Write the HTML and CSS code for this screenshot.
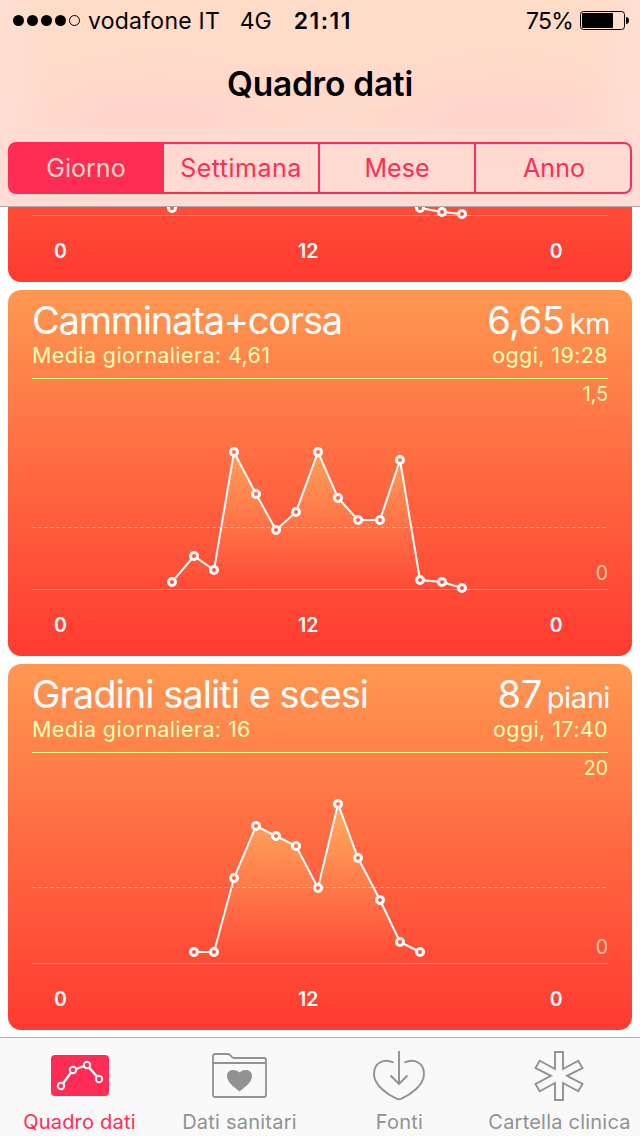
FILE: index.html
```
<!DOCTYPE html>
<html lang="it">
<head>
  <meta charset="UTF-8" />
  <meta name="viewport" content="width=device-width, initial-scale=1" />
  <title>Quadro dati</title>
  <link rel="stylesheet" href="styles.css">
</head>
<body>

<header>
  <div class="status-bar">
    <div class="signal">
      <i></i><i></i><i></i><i></i><i class="empty"></i>
    </div>
    <span class="carrier">vodafone IT</span>
    <span class="network">4G</span>
    <span class="time">21:11</span>
    <span class="percent">75%</span>
    <svg class="battery" width="49" height="19" viewBox="0 0 49 19">
      <rect x="0.5" y="0.5" width="44" height="18" rx="3" fill="none" stroke="#000" />
      <rect x="2" y="2" width="31" height="15" rx="1" />
      <path d="M46 6c1.8 0 3 1.5 3 3.5S47.800 13 46 13z" />
    </svg>
  </div>
  <h1>Quadro dati</h1>
  <nav class="segments">
    <a class="active">Giorno</a>
    <a class="week">Settimana</a>
    <a>Mese</a>
    <a class="year">Anno</a>
  </nav>
</header>

<main>
  <section class="card">
    <svg class="chart" viewBox="0 0 576 211">
      <defs>
        <linearGradient id="cardFill" gradientUnits="userSpaceOnUse" x1="0" y1="-89" x2="0" y2="277">
          <stop offset="0" stop-color="#ff9852" />
          <stop offset="1" stop-color="#ff3a30" />
        </linearGradient>
        <linearGradient id="areaFill" gradientUnits="userSpaceOnUse" x1="0" y1="30" x2="0" y2="205">
          <stop offset="0" stop-color="#ffcc6c" stop-opacity="0.8" />
          <stop offset="1" stop-color="#ffa060" stop-opacity="0" />
        </linearGradient>
      </defs>
      <path class="base" d="M0 210.500H576" />
      <polyline class="line" points="388,203 410,207 430,209" />
      <g class="dots">
        <circle cx="140" cy="203" r="3.5" />
        <circle cx="388" cy="203" r="3.5" />
        <circle cx="410" cy="207" r="3.5" />
        <circle cx="430" cy="209" r="3.5" />
      </g>
    </svg>
    <div class="hours"><span>0</span><span>12</span><span>0</span></div>
  </section>

  <section class="card">
    <div class="card-head">
      <div class="row">
        <h2>Camminata+corsa</h2>
        <p class="value">6,65<small>km</small></p>
      </div>
      <div class="row sub">
        <span>Media giornaliera: 4,61</span>
        <span>oggi, 19:28</span>
      </div>
    </div>
    <svg class="chart" viewBox="0 0 576 211">
      <path class="base" d="M0 210.500H576" />
      <polygon class="area" points="140,210 140,203 162,177 182,191 202,73 224,115 244,151 264,133 286,73 306,119 326,141 348,141 368,81 388,201 410,203 430,209 430,210" />
      <path class="average" d="M0 148.500H576" />
      <polyline class="line" points="140,203 162,177 182,191 202,73 224,115 244,151 264,133 286,73 306,119 326,141 348,141 368,81 388,201 410,203 430,209" />
      <g class="dots">
        <circle cx="140" cy="203" r="3.5" />
        <circle cx="162" cy="177" r="3.5" />
        <circle cx="182" cy="191" r="3.5" />
        <circle cx="202" cy="73" r="3.5" />
        <circle cx="224" cy="115" r="3.5" />
        <circle cx="244" cy="151" r="3.5" />
        <circle cx="264" cy="133" r="3.5" />
        <circle cx="286" cy="73" r="3.5" />
        <circle cx="306" cy="119" r="3.5" />
        <circle cx="326" cy="141" r="3.5" />
        <circle cx="348" cy="141" r="3.5" />
        <circle cx="368" cy="81" r="3.5" />
        <circle cx="388" cy="201" r="3.5" />
        <circle cx="410" cy="203" r="3.5" />
        <circle cx="430" cy="209" r="3.5" />
      </g>
      <text class="max" x="576" y="22">1,5</text>
      <text class="min" x="576" y="201">0</text>
    </svg>
    <div class="hours"><span>0</span><span>12</span><span>0</span></div>
  </section>

  <section class="card">
    <div class="card-head">
      <div class="row">
        <h2 class="stairs">Gradini saliti e scesi</h2>
        <p class="value">87<small>piani</small></p>
      </div>
      <div class="row sub">
        <span>Media giornaliera: 16</span>
        <span>oggi, 17:40</span>
      </div>
    </div>
    <svg class="chart" viewBox="0 0 576 211">
      <path class="base" d="M0 210.500H576" />
      <polygon class="area" points="162,210 162,199 182,199 202,125 224,73 244,83 264,93 286,135 306,51 326,105 348,147 368,189 388,199 388,210" />
      <path class="average" d="M0 134.500H576" />
      <polyline class="line" points="162,199 182,199 202,125 224,73 244,83 264,93 286,135 306,51 326,105 348,147 368,189 388,199" />
      <g class="dots">
        <circle cx="162" cy="199" r="3.5" />
        <circle cx="182" cy="199" r="3.5" />
        <circle cx="202" cy="125" r="3.5" />
        <circle cx="224" cy="73" r="3.5" />
        <circle cx="244" cy="83" r="3.5" />
        <circle cx="264" cy="93" r="3.5" />
        <circle cx="286" cy="135" r="3.5" />
        <circle cx="306" cy="51" r="3.5" />
        <circle cx="326" cy="105" r="3.5" />
        <circle cx="348" cy="147" r="3.5" />
        <circle cx="368" cy="189" r="3.5" />
        <circle cx="388" cy="199" r="3.5" />
      </g>
      <text class="max" x="576" y="22">20</text>
      <text class="min" x="576" y="201">0</text>
    </svg>
    <div class="hours"><span>0</span><span>12</span><span>0</span></div>
  </section>
</main>

<footer>
  <a class="active">
    <svg width="60" height="52" viewBox="0 0 60 52">
      <rect x="1" y="5" width="58" height="41" rx="4" fill="#ff2d55" />
      <g fill="none" stroke="#fff" stroke-width="2">
        <path d="M13 33.500L21 22.500M26 19L34 16M39 17.500L47 26.500" stroke-width="2.400" />
        <circle cx="11" cy="36" r="3.200" />
        <circle cx="23" cy="20" r="3.200" />
        <circle cx="37" cy="15" r="3.200" />
        <circle cx="49" cy="29" r="3.200" />
      </g>
    </svg>
    <span>Quadro dati</span>
  </a>
  <a>
    <svg width="60" height="52" viewBox="0 0 60 52">
      <path d="M3 45V6a2 2 0 0 1 2-2h13c3 0 3 4 6 4h30a2 2 0 0 1 2 2v35a2 2 0 0 1-2 2H5a2 2 0 0 1-2-2zM3 13h53" fill="none" stroke="#929292" stroke-width="1.800" />
      <path d="M29.500 41.500C26 38.500 17 33 17 26c0-3.500 2.500-6 6-6 3 0 5.200 1 6.500 2.500C30.800 21 33 20 36 20c3.500 0 6 2.500 6 6 0 7-9 12.500-12.500 15.500z" fill="#929292" />
    </svg>
    <span>Dati sanitari</span>
  </a>
  <a>
    <svg width="60" height="52" viewBox="0 0 60 52">
      <g fill="none" stroke="#929292" stroke-width="1.900">
        <path d="M23.600 12.500C14 8 4 12.500 4 24c0 11.500 14 21 23 24.900q2 .8 4 0C40 45 54 35.500 54 24c0-11.500-10-16-19.600-11.500" />
        <path d="M29 1v32M20.500 25.500l8.500 8.500 8.500-8.500" />
      </g>
    </svg>
    <span>Fonti</span>
  </a>
  <a>
    <svg width="60" height="52" viewBox="0 0 60 52">
      <path d="M25 2h8v17l15.300-8.300 4.200 7.300L37 25.800l15.500 8.200-4.200 7.300L33 33v17H25V33L9.700 41.300 5.500 34 21 25.800 5.500 18l4.200-7.300L25 19z" fill="none" stroke="#929292" stroke-width="1.900" />
    </svg>
    <span>Cartella clinica</span>
  </a>
</footer>

</body>
</html>
```

FILE: styles.css
```
* {
  margin: 0;
  padding: 0;
  box-sizing: border-box;
}

body {
  width: 640px;
  height: 1136px;
  margin: 0 auto;
  font-family: 'Inter', sans-serif;
  background-color: #fff;
  display: flex;
  flex-direction: column;
  overflow: hidden;
}

header {
  height: 207px;
  flex-shrink: 0;
  padding: 0 8px;
  background:
    linear-gradient(to bottom, rgba(255, 220, 212, 0) 128px, rgba(255, 220, 212, 0.7) 128px),
    linear-gradient(to right, rgba(255, 226, 218, 0.6), rgba(255, 226, 218, 0) 50px, rgba(255, 226, 218, 0) 590px, rgba(255, 226, 218, 0.6)),
    radial-gradient(ellipse 150px 85px at 155px 135px, #ffd3c8, rgba(255, 211, 200, 0)),
    radial-gradient(ellipse 150px 85px at 505px 135px, #ffd3c8, rgba(255, 211, 200, 0)),
    linear-gradient(to bottom, #ffdcc8 0, #ffdbca 60px, #ffd9cc 127px, #ffd8cf 100%);
  border-bottom: 1px solid #a9a9a9;
}

.status-bar {
  height: 40px;
  padding: 0 3px 0 5px;
  display: flex;
  align-items: center;
  font-size: 23px;
  line-height: 40px;
  white-space: nowrap;
}

.status-bar span {
  padding-top: 2px;
}

.signal {
  display: flex;
  gap: 3px;
  margin-right: 8px;
}

.signal i {
  width: 11px;
  height: 11px;
  border-radius: 50%;
  background: #000;
}

.signal .empty {
  background: none;
  border: 1px solid #000;
}

.carrier {
  letter-spacing: 0.25px;
}

.network {
  margin-left: 19.5px;
}

.time {
  margin-left: 22px;
  font-weight: 600;
  letter-spacing: 1.5px;
}

.percent {
  margin-left: auto;
  letter-spacing: -0.8px;
}

.battery {
  margin-left: 7px;
}

h1 {
  height: 102px;
  padding-top: 22px;
  font-size: 33.5px;
  font-weight: 600;
  line-height: 45px;
  letter-spacing: -0.25px;
  text-align: center;
}

.segments {
  height: 52px;
  display: grid;
  grid-template-columns: 152px 156px 156px 156px;
  border: 2px solid #ff2d55;
  border-radius: 8px;
}

.segments a {
  display: flex;
  align-items: center;
  justify-content: center;
  color: #ff2d55;
  font-size: 25px;
}

.segments a + a {
  border-left: 2px solid #ff2d55;
}

.segments .week {
  letter-spacing: 0.5px;
}

.segments .year {
  padding-left: 2px;
}

.segments .active {
  background: #ff2d55;
  border-radius: 5px 0 0 5px;
  box-shadow: 0 0 0 1px #ff2d55;
  color: #ffd6cc;
}

main {
  flex: 1;
  min-height: 0;
  padding: 0 8px 7px;
  display: flex;
  flex-direction: column;
  justify-content: flex-end;
  gap: 8px;
  overflow: hidden;
}

.card {
  height: 366px;
  flex-shrink: 0;
  padding: 0 24px;
  display: flex;
  flex-direction: column;
  justify-content: flex-end;
  background: linear-gradient(to bottom, #ff9852, #ff3a30);
  border-radius: 13px;
  color: #fff;
}

.card-head {
  height: 89px;
  padding-top: 6px;
  border-bottom: 1px solid #ffff80;
}

.row {
  height: 48px;
  display: flex;
  justify-content: space-between;
  align-items: baseline;
  line-height: 48px;
  white-space: nowrap;
}

h2 {
  font-size: 38px;
  font-weight: 400;
  letter-spacing: -1.2px;
}

h2.stairs {
  letter-spacing: -0.95px;
}

.value {
  margin-right: -2px;
  font-size: 38px;
  letter-spacing: -0.4px;
}

.value small {
  margin-left: 5px;
  font-size: 29px;
}

.sub {
  height: 22px;
  line-height: 22px;
  font-size: 21.5px;
  letter-spacing: 0.4px;
  color: #ffffb8;
}

.chart {
  display: block;
  width: 576px;
  height: 211px;
  overflow: visible;
}

.base {
  stroke: #fff;
  stroke-opacity: 0.4;
}

.average {
  stroke: #fff;
  stroke-opacity: 0.5;
  stroke-dasharray: 4 2;
}

.area {
  fill: url(#areaFill);
}

.line {
  fill: none;
  stroke: #fff;
  stroke-width: 2;
}

.dots circle {
  fill: url(#cardFill);
  stroke: #fff;
  stroke-width: 3;
}

.chart text {
  font-size: 19.5px;
  text-anchor: end;
}

.max {
  fill: #ffffb8;
}

.min {
  fill: #ffc8a8;
}

.hours {
  height: 66px;
  padding: 0 45.5px 0 22px;
  display: flex;
  justify-content: space-between;
  font-size: 19.5px;
  font-weight: 600;
  line-height: 71px;
}

footer {
  height: 99px;
  flex-shrink: 0;
  display: grid;
  grid-template-columns: repeat(4, 1fr);
  background: #f9f9f9;
  border-top: 1px solid #b2b2b2;
}

footer a {
  display: flex;
  flex-direction: column;
  align-items: center;
  padding-top: 12px;
  color: #929292;
  font-size: 20px;
  letter-spacing: 0.22px;
  white-space: nowrap;
}

footer span {
  line-height: 24px;
  margin: 8px 1px 0 0;
}

footer .active {
  color: #ff2d55;
}
```
